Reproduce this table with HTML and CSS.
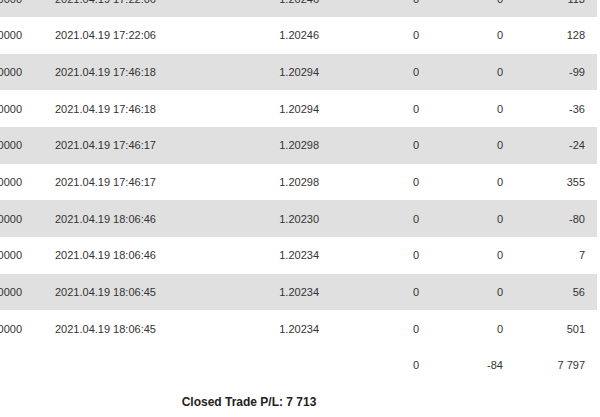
FILE: index.html
```html
<!DOCTYPE html>
<html>
<head>
<meta charset="utf-8">
<link rel="stylesheet" href="styles.css">
</head>
<body>
<div class="report">
  <table class="trades">
    <colgroup>
      <col class="c-vol"><col class="c-time"><col class="c-price"><col class="c-a"><col class="c-b"><col class="c-pl">
    </colgroup>
    <tbody>
      <tr class="odd"><td class="num">0.10000</td><td>2021.04.19 17:22:06</td><td class="num">1.20246</td><td class="num">0</td><td class="num">0</td><td class="num">113</td></tr>
      <tr><td class="num">0.10000</td><td>2021.04.19 17:22:06</td><td class="num">1.20246</td><td class="num">0</td><td class="num">0</td><td class="num">128</td></tr>
      <tr class="odd"><td class="num">0.10000</td><td>2021.04.19 17:46:18</td><td class="num">1.20294</td><td class="num">0</td><td class="num">0</td><td class="num">-99</td></tr>
      <tr><td class="num">0.10000</td><td>2021.04.19 17:46:18</td><td class="num">1.20294</td><td class="num">0</td><td class="num">0</td><td class="num">-36</td></tr>
      <tr class="odd"><td class="num">0.10000</td><td>2021.04.19 17:46:17</td><td class="num">1.20298</td><td class="num">0</td><td class="num">0</td><td class="num">-24</td></tr>
      <tr><td class="num">0.10000</td><td>2021.04.19 17:46:17</td><td class="num">1.20298</td><td class="num">0</td><td class="num">0</td><td class="num">355</td></tr>
      <tr class="odd"><td class="num">0.10000</td><td>2021.04.19 18:06:46</td><td class="num">1.20230</td><td class="num">0</td><td class="num">0</td><td class="num">-80</td></tr>
      <tr><td class="num">0.10000</td><td>2021.04.19 18:06:46</td><td class="num">1.20234</td><td class="num">0</td><td class="num">0</td><td class="num">7</td></tr>
      <tr class="odd"><td class="num">0.10000</td><td>2021.04.19 18:06:45</td><td class="num">1.20234</td><td class="num">0</td><td class="num">0</td><td class="num">56</td></tr>
      <tr><td class="num">0.10000</td><td>2021.04.19 18:06:45</td><td class="num">1.20234</td><td class="num">0</td><td class="num">0</td><td class="num">501</td></tr>
      <tr class="total"><td></td><td></td><td></td><td class="num">0</td><td class="num">-84</td><td class="num">7 797</td></tr>
    </tbody>
  </table>
  <div class="summary">Closed Trade P/L: 7 713</div>
</div>
</body>
</html>
```
FILE: styles.css
```css
html, body {
  margin: 0;
  padding: 0;
  overflow: hidden;
  background: #ffffff;
}
body {
  font-family: "Liberation Sans", Arial, sans-serif;
  font-size: 11px;
  color: #333333;
}
.report {
  width: 696px;
  margin-left: -99px;
  margin-top: -19.67px;
}
.trades {
  width: 696px;
  table-layout: fixed;
  border-collapse: collapse;
}
.c-vol { width: 139px; }
.c-time { width: 180px; }
.c-price { width: 111px; }
.c-a { width: 100px; }
.c-b { width: 84px; }
.c-pl { width: 82px; }
.trades tr {
  height: 36.67px;
}
.trades td {
  padding: 0 0 0 15px;
  white-space: nowrap;
  vertical-align: middle;
}
.trades td.num {
  text-align: right;
  padding: 0 12px 0 0;
}
.trades td:first-child.num {
  padding-right: 18px;
}
.trades tr.odd td {
  background: #e0e0e0;
}
.summary {
  height: 36.67px;
  line-height: 36.67px;
  text-align: center;
  font-size: 12px;
  font-weight: bold;
  color: #222222;
}
```
